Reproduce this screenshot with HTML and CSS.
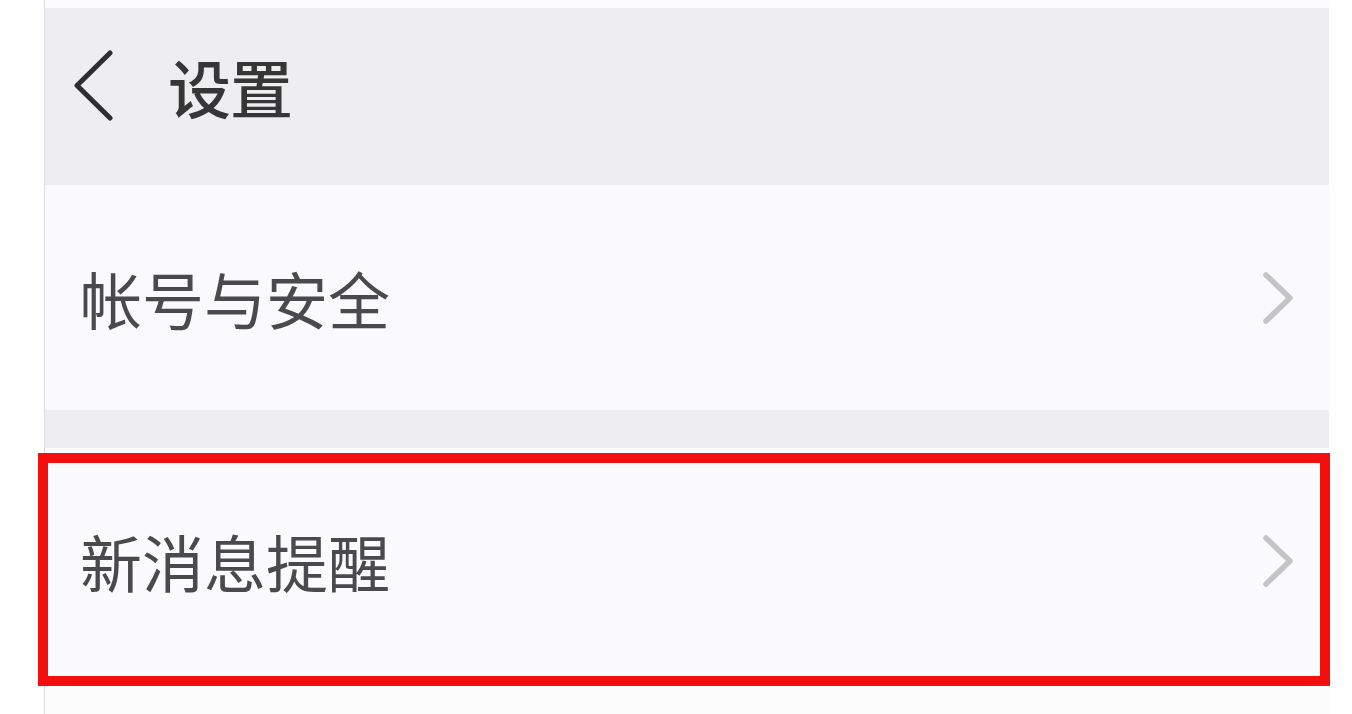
FILE: index.html
```html
<!DOCTYPE html>
<html lang="zh-CN">
<head>
<meta charset="utf-8">
<title>设置</title>
<link rel="stylesheet" href="styles.css">
</head>
<body>
<div class="screen">
  <header class="topbar">
    <svg class="back" width="40" height="72" viewBox="0 0 40 72" aria-hidden="true">
      <path d="M36 3 L3 35.5 L36 68" fill="none" stroke="#2e2e2e" stroke-width="5" stroke-linecap="round" stroke-linejoin="round"/>
    </svg>
    <h1 class="title">设置</h1>
  </header>
  <div class="row">
    <span class="label">帐号与安全</span>
    <svg class="arrow" width="34" height="54" viewBox="0 0 34 54" aria-hidden="true">
      <path d="M5 4 L29 27 L5 50" fill="none" stroke="#c3c3c8" stroke-width="5.5" stroke-linecap="round" stroke-linejoin="round"/>
    </svg>
  </div>
  <div class="gap"></div>
  <div class="row row-marked">
    <span class="label">新消息提醒</span>
    <svg class="arrow" width="34" height="54" viewBox="0 0 34 54" aria-hidden="true">
      <path d="M5 4 L29 27 L5 50" fill="none" stroke="#c3c3c8" stroke-width="5.5" stroke-linecap="round" stroke-linejoin="round"/>
    </svg>
    <div class="highlight"></div>
  </div>
  <div class="rest"></div>
</div>
</body>
</html>
```

FILE: styles.css
```css
html, body {
  margin: 0;
  padding: 0;
  background: #ffffff;
  height: 714px;
  overflow: hidden;
}

body {
  font-family: "Noto Sans CJK SC", "Noto Sans", sans-serif;
}

.screen {
  margin-left: 44px;
  width: 1284px;
  padding-top: 8px;
  border-left: 1px solid #d9dce0;
  height: 706px;
  background: #fcfcfd;
  display: flex;
  flex-direction: column;
}

.topbar {
  height: 154px;
  padding-bottom: 23px;
  background: #eeeef0;
  display: flex;
  align-items: center;
  padding-left: 29px;
  flex-shrink: 0;
}

.back {
  display: block;
  margin-top: 2px;
}

.title {
  margin: 0 0 0 54px;
  font-size: 63px;
  font-weight: 500;
  color: #363636;
  line-height: 1;
  letter-spacing: -1px;
}

.row {
  position: relative;
  height: 225px;
  background: #fafafc;
  display: flex;
  align-items: center;
  justify-content: space-between;
  padding-left: 35px;
  padding-right: 34px;
  flex-shrink: 0;
}

.label {
  font-size: 62px;
  line-height: 1;
  color: #4a4a4c;
  letter-spacing: 0;
}

.arrow {
  display: block;
}

.gap {
  height: 38px;
  background: #eeeef0;
  flex-shrink: 0;
}

.row-marked {
  background: #fbfbfd;
}

.highlight {
  position: absolute;
  left: -7px;
  right: -1px;
  top: 5px;
  height: 213px;
  border: 10px solid #f40f0f;
  pointer-events: none;
}

.rest {
  flex: 1;
  background: #fcfcfd;
}
```
